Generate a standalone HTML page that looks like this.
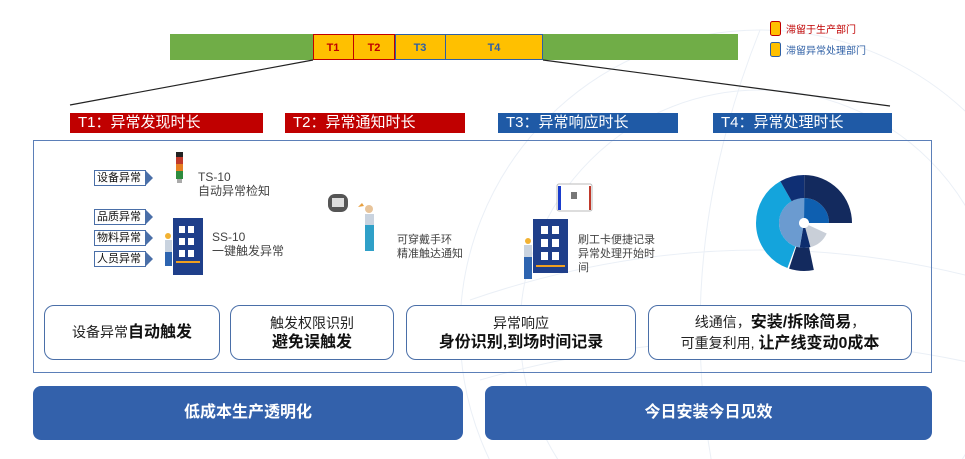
<!DOCTYPE html>
<html><head><meta charset="utf-8"><style>
*{margin:0;padding:0;box-sizing:border-box}
html,body{width:965px;height:459px;overflow:hidden}
body{background:#fff;position:relative;font-family:"Liberation Sans","Noto Sans CJK SC",sans-serif}
.a{position:absolute}
.lab{position:absolute;height:20px;color:#fff;font-size:15px;line-height:20px;padding-left:8px;white-space:nowrap}
.card{position:absolute;border:1px solid #4a6fa8;border-radius:10px;background:#fff;text-align:center;font-size:14px;color:#222;display:flex;flex-direction:column;justify-content:center;line-height:20px}
.card b{font-size:16px;color:#111}
.btn{position:absolute;top:386px;height:54px;background:#3361ab;border-radius:8px;color:#fff;font-weight:bold;font-size:16px;text-align:center;line-height:54px}
.tag{position:absolute;left:94px;width:52px;height:16px;border:1px solid #4a6fa8;font-size:11px;line-height:14px;padding-left:2px;color:#111;background:#fff}
.tag:after{content:"";position:absolute;right:-8px;top:-1px;border-left:8px solid #4a6fa8;border-top:8px solid transparent;border-bottom:8px solid transparent}
.t{position:absolute;font-size:11px;color:#444;line-height:14px;white-space:nowrap}
</style></head><body>
<svg class="a" style="left:0;top:0" width="965" height="459">
<g opacity="0.2" fill="none" stroke="#9bb4d4"><circle cx="760" cy="330" r="300"/><circle cx="760" cy="330" r="240"/><path d="M470 300 Q760 200 1050 300 M480 380 Q760 300 1040 380 M760 30 Q640 330 760 630"/></g>
<rect x="170" y="34" width="568" height="26" fill="#70ad47"/>
<rect x="313" y="34" width="230" height="26" fill="#ffc000"/>
<rect x="313.5" y="34.5" width="40" height="25" fill="none" stroke="#c00000"/>
<rect x="353.5" y="34.5" width="41" height="25" fill="none" stroke="#c00000"/>
<rect x="395.5" y="34.5" width="50" height="25" fill="none" stroke="#2e5fa5"/>
<rect x="445.5" y="34.5" width="97" height="25" fill="none" stroke="#2e5fa5"/>
<text x="333" y="51" font-size="11" font-weight="bold" text-anchor="middle" fill="#c00000" font-family="Liberation Sans">T1</text>
<text x="374" y="51" font-size="11" font-weight="bold" text-anchor="middle" fill="#c00000" font-family="Liberation Sans">T2</text>
<text x="420" y="51" font-size="11" font-weight="bold" text-anchor="middle" fill="#2e5fa5" font-family="Liberation Sans">T3</text>
<text x="494" y="51" font-size="11" font-weight="bold" text-anchor="middle" fill="#2e5fa5" font-family="Liberation Sans">T4</text>
<line x1="313" y1="60" x2="70" y2="105" stroke="#222" stroke-width="1.2"/>
<line x1="543" y1="60" x2="890" y2="106" stroke="#222" stroke-width="1.2"/>
<rect x="770.5" y="21.5" width="10" height="14" rx="2" fill="#ffc000" stroke="#c00000"/>
<rect x="770.5" y="42.5" width="10" height="14" rx="2" fill="#ffc000" stroke="#2e5fa5"/>
<rect x="33.5" y="140.5" width="898" height="232" fill="none" stroke="#5b7fb8"/>
<circle cx="804" cy="223" r="15" fill="none" stroke="#6b9bd0" stroke-width="20" stroke-dasharray="44.5 94.25" stroke-dashoffset="-26.2"/>
<circle cx="804" cy="223" r="15" fill="none" stroke="#0e5fb0" stroke-width="20" stroke-dasharray="30.1 94.25" stroke-dashoffset="-70.7"/>
<circle cx="804" cy="223" r="15" fill="none" stroke="#c9cfd8" stroke-width="20" stroke-dasharray="13.1 94.25" stroke-dashoffset="-6.5"/>
<circle cx="804" cy="223" r="15" fill="none" stroke="#0d2d6e" stroke-width="20" stroke-dasharray="6.5 94.25" stroke-dashoffset="-19.6"/>
<circle cx="804" cy="223" r="36.5" fill="none" stroke="#14a4dc" stroke-width="23" stroke-dasharray="82.8 229.3" stroke-dashoffset="-70.1"/>
<circle cx="804" cy="223" r="36.5" fill="none" stroke="#0f2f74" stroke-width="23" stroke-dasharray="19.1 229.3" stroke-dashoffset="-152.9"/>
<circle cx="804" cy="223" r="36.5" fill="none" stroke="#132a5e" stroke-width="23" stroke-dasharray="79.6 229.3" stroke-dashoffset="-172"/>
<circle cx="804" cy="223" r="36.5" fill="none" stroke="#132a5e" stroke-width="23" stroke-dasharray="19.1 229.3" stroke-dashoffset="-49.7"/>
<circle cx="804" cy="223" r="5" fill="#fff"/>
<rect x="176" y="152" width="7" height="5" fill="#222"/><rect x="176" y="157" width="7" height="7" fill="#c0392b"/><rect x="176" y="164" width="7" height="7" fill="#e67e22"/><rect x="176" y="171" width="7" height="8" fill="#2e8b3e"/><rect x="177" y="179" width="5" height="4" fill="#aaa"/>
<rect x="173" y="218" width="30" height="57" fill="#1f3f8a"/><g fill="#fff"><rect x="179" y="226" width="6" height="7"/><rect x="188" y="226" width="6" height="7"/><rect x="179" y="238" width="6" height="7"/><rect x="188" y="238" width="6" height="7"/><rect x="179" y="250" width="6" height="7"/><rect x="188" y="250" width="6" height="7"/></g><rect x="176" y="261" width="24" height="2" fill="#f0a020"/>
<circle cx="168" cy="236" r="3" fill="#f2b233"/><rect x="165" y="240" width="7" height="12" fill="#c9d3df"/><rect x="165" y="252" width="7" height="14" fill="#2d64b0"/>
<rect x="533" y="219" width="35" height="54" fill="#1f3f8a"/><g fill="#fff"><rect x="541" y="226" width="7" height="8"/><rect x="552" y="226" width="7" height="8"/><rect x="541" y="239" width="7" height="8"/><rect x="552" y="239" width="7" height="8"/><rect x="541" y="252" width="7" height="8"/><rect x="552" y="252" width="7" height="8"/></g><rect x="536" y="265" width="29" height="2" fill="#f0a020"/>
<circle cx="528" cy="241" r="3" fill="#f2b233"/><rect x="524" y="245" width="8" height="12" fill="#c9d3df"/><rect x="524" y="257" width="8" height="22" fill="#2d64b0"/>
<rect x="557" y="184" width="35" height="27" rx="2" fill="#fff" stroke="#bbb"/><rect x="558" y="186" width="3" height="24" fill="#1a3ccc"/><rect x="589" y="186" width="2" height="24" fill="#c0392b"/><rect x="571" y="192" width="6" height="7" fill="#777"/>
<rect x="328" y="194" width="20" height="18" rx="7" fill="#555"/><rect x="332" y="198" width="12" height="9" fill="#ddd"/>
<circle cx="369" cy="209" r="4" fill="#e8c49a"/><rect x="365" y="214" width="9" height="14" fill="#c9d3df"/><rect x="365" y="225" width="9" height="26" fill="#2fa0c8"/><path d="M358 207 l4 -4 2 3z" fill="#e8a040"/>
</svg>
<div class="a" style="left:786px;top:21px;font-size:10px;color:#c00000;white-space:nowrap">滞留于生产部门</div>
<div class="a" style="left:786px;top:42px;font-size:10px;color:#2e5fa5;white-space:nowrap">滞留异常处理部门</div>
<div class="lab" style="left:70px;top:113px;width:193px;background:#c00000">T1：异常发现时长</div>
<div class="lab" style="left:285px;top:113px;width:180px;background:#c00000">T2：异常通知时长</div>
<div class="lab" style="left:498px;top:113px;width:180px;background:#1f5aa6">T3：异常响应时长</div>
<div class="lab" style="left:713px;top:113px;width:179px;background:#1f5aa6">T4：异常处理时长</div>
<div class="tag" style="top:170px">设备异常</div>
<div class="tag" style="top:209px">品质异常</div>
<div class="tag" style="top:230px">物料异常</div>
<div class="tag" style="top:251px">人员异常</div>
<div class="t" style="left:198px;top:170px;font-size:12px">TS-10<br>自动异常检知</div>
<div class="t" style="left:212px;top:230px;font-size:12px">SS-10<br>一键触发异常</div>
<div class="t" style="left:397px;top:233px">可穿戴手环<br>精准触达通知</div>
<div class="t" style="left:578px;top:233px">刷工卡便捷记录<br>异常处理开始时<br>间</div>
<div class="card" style="left:44px;top:305px;width:176px;height:55px"><div>设备异常<b>自动触发</b></div></div>
<div class="card" style="left:230px;top:305px;width:164px;height:55px"><div>触发权限识别</div><b>避免误触发</b></div>
<div class="card" style="left:406px;top:305px;width:230px;height:55px"><div>异常响应</div><b>身份识别,到场时间记录</b></div>
<div class="card" style="left:648px;top:305px;width:264px;height:55px"><div>线通信，<b>安装/拆除简易</b>，</div><div>可重复利用, <b>让产线变动0成本</b></div></div>
<div class="btn" style="left:33px;width:430px">低成本生产透明化</div>
<div class="btn" style="left:485px;width:447px">今日安装今日见效</div>
</body></html>
